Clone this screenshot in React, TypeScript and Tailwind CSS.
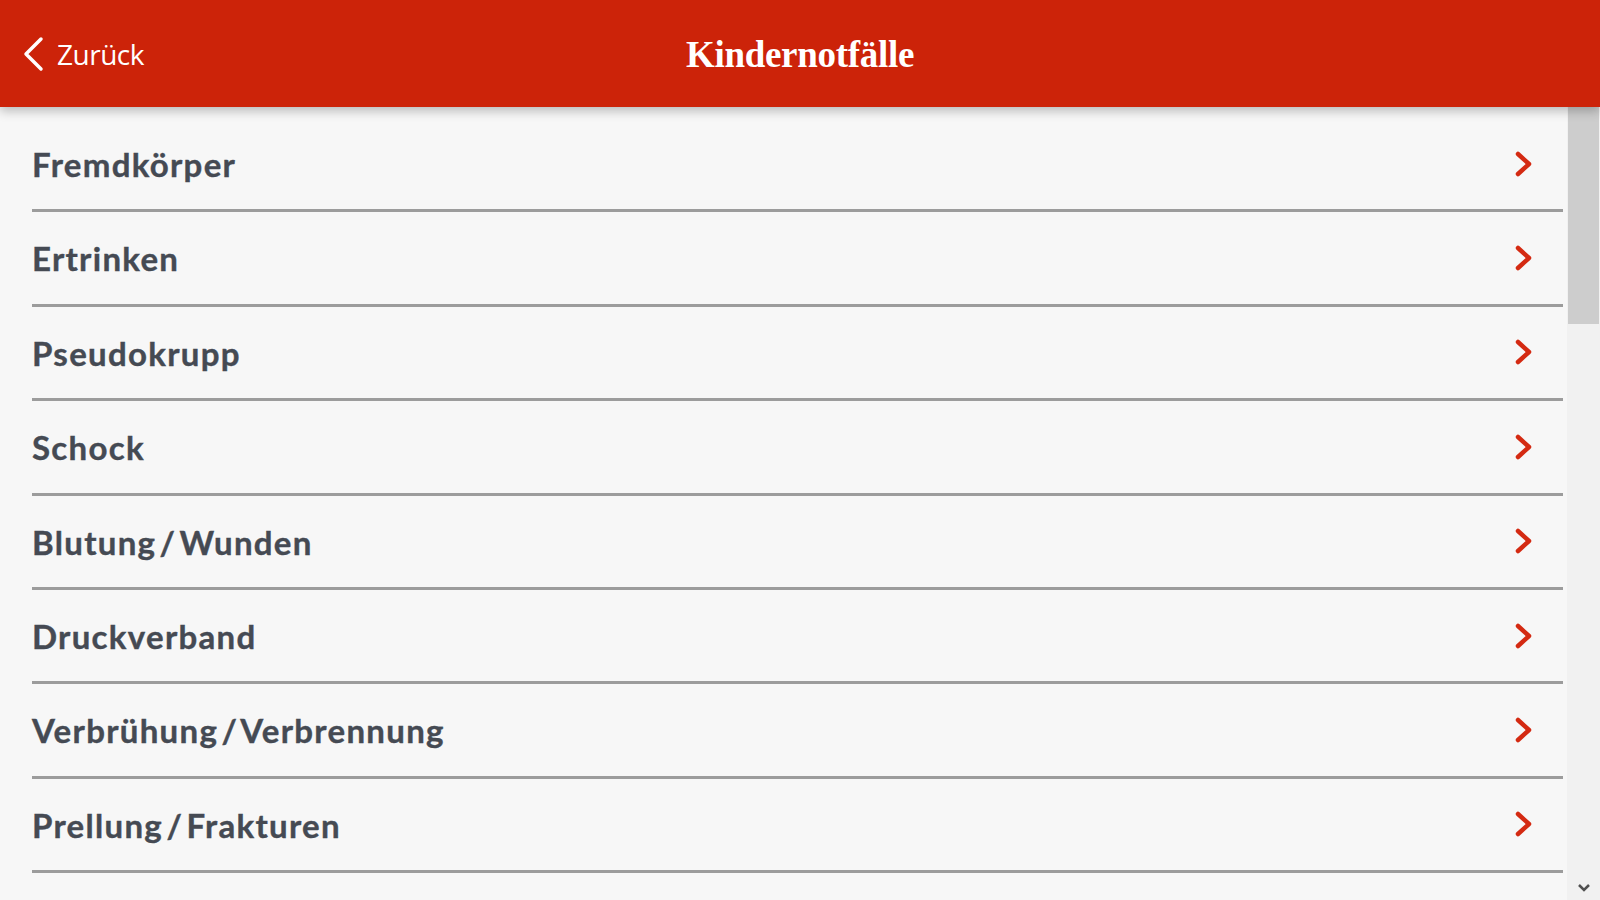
import React from 'react';

const items = [
  'Fremdkörper',
  'Ertrinken',
  'Pseudokrupp',
  'Schock',
  'Blutung / Wunden',
  'Druckverband',
  'Verbrühung / Verbrennung',
  'Prellung / Frakturen',
];

function ChevronRight() {
  return (
    <svg width="18" height="28" viewBox="0 0 18 28" fill="none">
      <path d="M3 4 L14 14 L3 24" stroke="#d42a12" strokeWidth="4.5" strokeLinecap="round" strokeLinejoin="round" />
    </svg>
  );
}

export default function App() {
  return (
    <div className="w-[1600px] h-[900px] overflow-hidden flex flex-col bg-[#f7f7f7]">
      {/* Header */}
      <header className="relative z-10 h-[107px] shrink-0 bg-[#cc2309] flex items-center shadow-[0_4px_10px_rgba(0,0,0,0.25)]">
        <button className="flex items-center gap-[13px] pl-[22px] pt-[1px] text-white">
          <svg width="22" height="36" viewBox="0 0 22 36" fill="none">
            <path d="M19 3 L4 18 L19 33" stroke="white" strokeWidth="3.5" strokeLinecap="round" strokeLinejoin="round" />
          </svg>
          <span className="text-[28px] font-['Open_Sans',sans-serif] tracking-[-0.5px]">Zurück</span>
        </button>
        <h1 className="absolute left-1/2 -translate-x-1/2 pt-[2px] text-white text-[37px] font-bold font-['Liberation_Serif',serif] tracking-[-0.3px]">
          Kindernotfälle
        </h1>
      </header>

      <div className="flex-1 flex min-h-0">
        {/* List */}
        <ul className="flex-1 pl-[32px] pr-[4px] pt-[11px]">
          {items.map((item) => (
            <li
              key={item}
              className="h-[94.4px] flex items-center justify-between border-b-[3px] border-[#9c9c9c]"
            >
              <span className="text-[33px] font-bold font-['Lato',sans-serif] text-[#454a53] pt-[2px] tracking-[1.3px] [word-spacing:-6px] [-webkit-text-stroke:0.4px_#454a53]">
                {item}
              </span>
              <span className="pr-[30px] flex items-center">
                <ChevronRight />
              </span>
            </li>
          ))}
        </ul>

        {/* Scrollbar */}
        <div className="w-[33px] shrink-0 bg-[#f1f1f1] flex flex-col">
          <div className="mx-[1px] h-[217px] bg-[#cdcdcd]" />
          <div className="flex-1" />
          <div className="h-[24px] flex items-center justify-center">
            <svg width="14" height="10" viewBox="0 0 14 10" fill="none">
              <path d="M2 2 L7 7 L12 2" stroke="#505050" strokeWidth="2.5" />
            </svg>
          </div>
        </div>
      </div>
    </div>
  );
}
